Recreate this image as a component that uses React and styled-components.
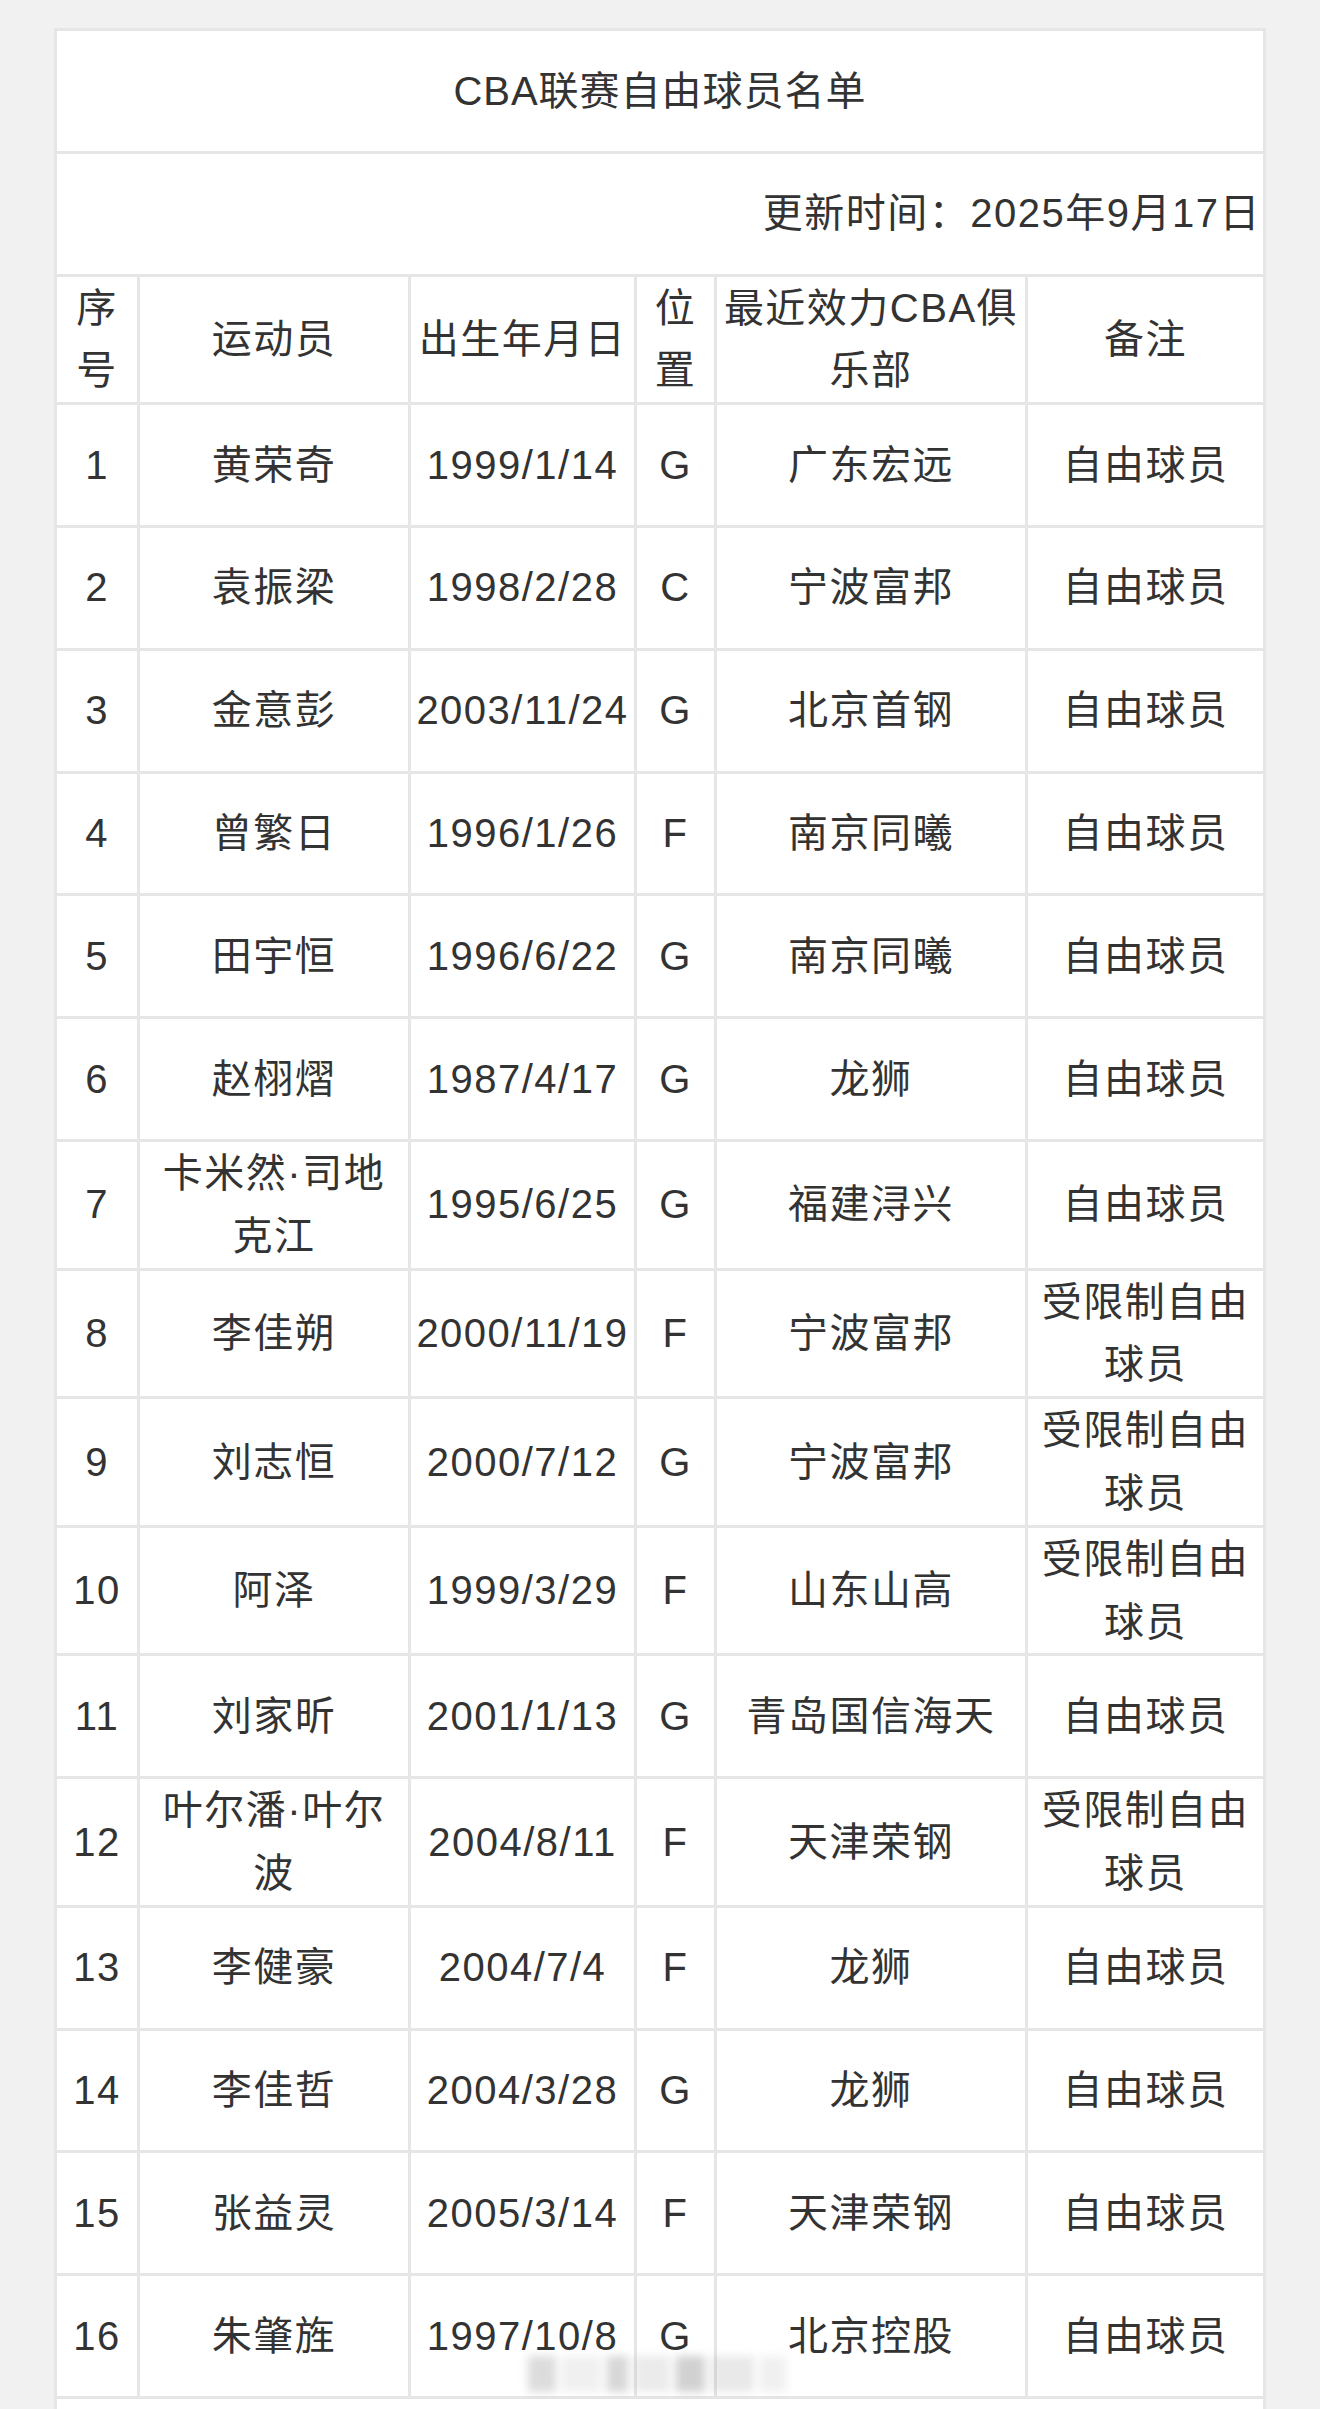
import React from 'react';
import styled, { createGlobalStyle } from 'styled-components';

const GlobalStyle = createGlobalStyle`
  html, body {
    margin: 0;
    padding: 0;
    background: #f1f1f1;
  }
  body {
    font-family: "Liberation Sans", "Noto Sans CJK SC", sans-serif;
    color: #333333;
  }
`;

const players = [
  ['1', ['黄荣奇'], '1999/1/14', 'G', ['广东宏远'], ['自由球员']],
  ['2', ['袁振梁'], '1998/2/28', 'C', ['宁波富邦'], ['自由球员']],
  ['3', ['金意彭'], '2003/11/24', 'G', ['北京首钢'], ['自由球员']],
  ['4', ['曾繁日'], '1996/1/26', 'F', ['南京同曦'], ['自由球员']],
  ['5', ['田宇恒'], '1996/6/22', 'G', ['南京同曦'], ['自由球员']],
  ['6', ['赵栩熠'], '1987/4/17', 'G', ['龙狮'], ['自由球员']],
  ['7', ['卡米然·司地', '克江'], '1995/6/25', 'G', ['福建浔兴'], ['自由球员']],
  ['8', ['李佳朔'], '2000/11/19', 'F', ['宁波富邦'], ['受限制自由', '球员']],
  ['9', ['刘志恒'], '2000/7/12', 'G', ['宁波富邦'], ['受限制自由', '球员']],
  ['10', ['阿泽'], '1999/3/29', 'F', ['山东山高'], ['受限制自由', '球员']],
  ['11', ['刘家昕'], '2001/1/13', 'G', ['青岛国信海天'], ['自由球员']],
  ['12', ['叶尔潘·叶尔', '波'], '2004/8/11', 'F', ['天津荣钢'], ['受限制自由', '球员']],
  ['13', ['李健豪'], '2004/7/4', 'F', ['龙狮'], ['自由球员']],
  ['14', ['李佳哲'], '2004/3/28', 'G', ['龙狮'], ['自由球员']],
  ['15', ['张益灵'], '2005/3/14', 'F', ['天津荣钢'], ['自由球员']],
  ['16', ['朱肇旌'], '1997/10/8', 'G', ['北京控股'], ['自由球员']],
];

const Lines = ({ lines }) =>
  lines.map((l, i) => (
    <React.Fragment key={i}>
      {i > 0 && <br />}
      {l}
    </React.Fragment>
  ));

export default function App() {
  return (
    <>
      <GlobalStyle />
      <Page>
        <Sheet>
          <Table>
            <colgroup>
              <col style={{ width: 80 }} />
              <col style={{ width: 268 }} />
              <col style={{ width: 223 }} />
              <col style={{ width: 77 }} />
              <col style={{ width: 308 }} />
              <col style={{ width: 235 }} />
            </colgroup>
            <tbody>
              <tr>
                <TitleCell colSpan={6}>CBA联赛自由球员名单</TitleCell>
              </tr>
              <tr>
                <UpdateCell colSpan={6}>更新时间：2025年9月17日</UpdateCell>
              </tr>
              <tr>
                <Cell><Lines lines={['序', '号']} /></Cell>
                <Cell>运动员</Cell>
                <Cell>出生年月日</Cell>
                <Cell><Lines lines={['位', '置']} /></Cell>
                <Cell><Lines lines={['最近效力CBA俱', '乐部']} /></Cell>
                <Cell>备注</Cell>
              </tr>
              {players.map(([no, name, birth, pos, club, note]) => (
                <tr key={no}>
                  <Cell>{no}</Cell>
                  <Cell><Lines lines={name} /></Cell>
                  <Cell>{birth}</Cell>
                  <Cell>{pos}</Cell>
                  <Cell><Lines lines={club} /></Cell>
                  <Cell><Lines lines={note} /></Cell>
                </tr>
              ))}
              <tr>
                <NoteCell colSpan={6}>
                  注：以上为中国篮协公布的2025年CBA联赛自由球员及受限制自由球员名单，具体以官方发布为准。
                </NoteCell>
              </tr>
            </tbody>
          </Table>
          <Watermark>
            <Blob $w={28} $o={0.35} />
            <Blob $w={40} $o={0.15} />
            <Blob $w={22} $o={0.4} />
            <Blob $w={36} $o={0.2} />
            <Blob $w={30} $o={0.45} />
            <Blob $w={44} $o={0.22} />
            <Blob $w={26} $o={0.15} />
          </Watermark>
        </Sheet>
      </Page>
    </>
  );
}

const Page = styled.div`
  padding: 28px 54px 0;
  height: 2409px;
  overflow: hidden;
  box-sizing: border-box;
`;

const Sheet = styled.div`
  position: relative;
  width: 1212px;
`;

const Table = styled.table`
  width: 1212px;
  table-layout: fixed;
  border-collapse: separate;
  border-spacing: 3px;
  background: #e6e6e6;
`;

const Cell = styled.td`
  background: #ffffff;
  height: 119.8px;
  padding: 0;
  text-align: center;
  vertical-align: middle;
  font-size: 40px;
  line-height: 62.8px;
  letter-spacing: 1.5px;
  white-space: nowrap;
  overflow: hidden;
`;

const TitleCell = styled(Cell)`
  letter-spacing: 1px;
`;

const UpdateCell = styled(Cell)`
  text-align: right;
  padding-right: 2px;
`;

const NoteCell = styled(Cell)`
  text-align: left;
  vertical-align: top;
  white-space: normal;
  padding: 0 8px;
`;

const Watermark = styled.div`
  position: absolute;
  left: 474px;
  top: 2328px;
  width: 258px;
  height: 36px;
  display: flex;
  gap: 6px;
  filter: blur(4px);
  pointer-events: none;
`;

const Blob = styled.div`
  width: ${(p) => p.$w}px;
  height: 100%;
  background: #9a9a9a;
  opacity: ${(p) => p.$o};
`;
